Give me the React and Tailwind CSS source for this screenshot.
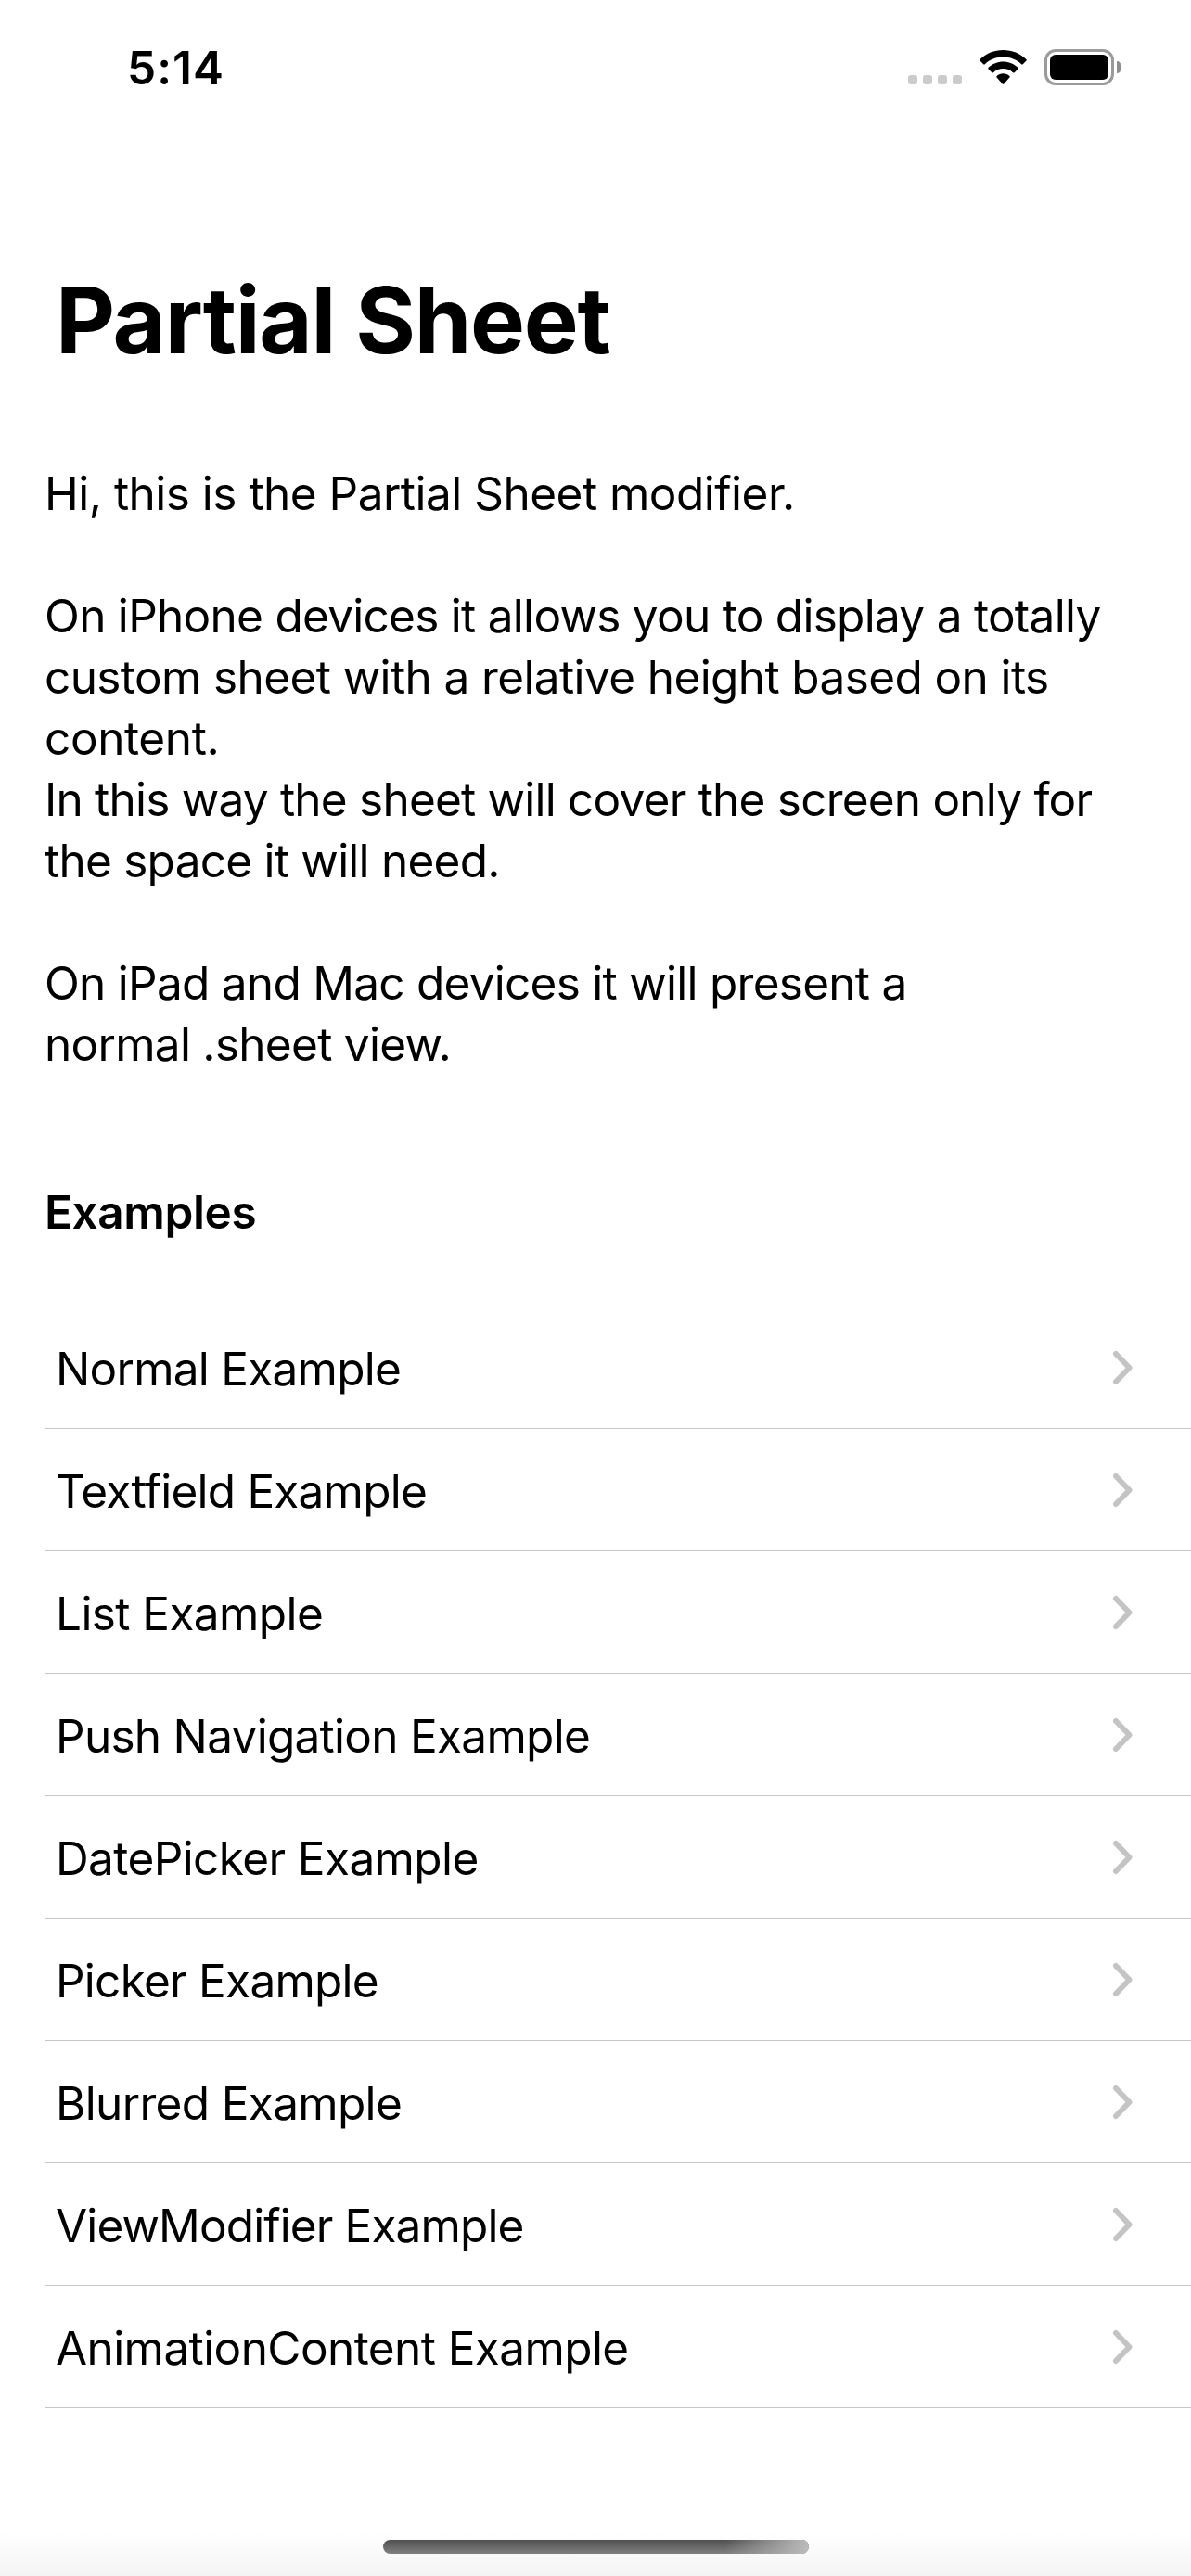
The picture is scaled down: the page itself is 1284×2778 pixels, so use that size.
import React from "react";

const intro = [
  { text: "Hi, this is the Partial Sheet modifier.", spacing: "tracking-[-0.51px]" },
  { text: "\u00a0", spacing: "" },
  { text: "On iPhone devices it allows you to display a totally", spacing: "tracking-[-0.72px]" },
  { text: "custom sheet with a relative height based on its", spacing: "tracking-[-0.61px]" },
  { text: "content.", spacing: "tracking-[-0.39px]" },
  { text: "In this way the sheet will cover the screen only for", spacing: "tracking-[-0.78px]" },
  { text: "the space it will need.", spacing: "tracking-[-0.75px]" },
  { text: "\u00a0", spacing: "" },
  { text: "On iPad and Mac devices it will present a", spacing: "tracking-[-0.73px]" },
  { text: "normal .sheet view.", spacing: "tracking-[-0.72px]" },
];

const examples = [
  { text: "Normal Example", spacing: "tracking-[-0.74px]" },
  { text: "Textfield Example", spacing: "tracking-[-0.78px]" },
  { text: "List Example", spacing: "tracking-[-0.59px]" },
  { text: "Push Navigation Example", spacing: "tracking-[-0.72px]" },
  { text: "DatePicker Example", spacing: "tracking-[-0.6px]" },
  { text: "Picker Example", spacing: "tracking-[-0.75px]" },
  { text: "Blurred Example", spacing: "tracking-[-0.66px]" },
  { text: "ViewModifier Example", spacing: "tracking-[-0.88px]" },
  { text: "AnimationContent Example", spacing: "tracking-[-0.59px]" },
];

function WifiIcon() {
  return (
    <svg className="mt-[54px] ml-[19px] h-[38px] w-[51px] shrink-0" viewBox="0 0 51 38" fill="#000">
      <path d="M25.5 0C35 0 43.8 3.6 50.4 9.9c.5.5.5 1.2 0 1.7l-3.6 3.6c-.5.5-1.2.5-1.7 0C39.900 10.300 32.900 7.600 25.500 7.600S11.100 10.300 5.900 15.200c-.5.5-1.200.5-1.700 0L.6 11.600c-.5-.5-.5-1.200 0-1.700C7.200 3.600 16 0 25.500 0Z" />
      <path d="M25.500 12.500c6 0 11.600 2.300 15.900 6.300.5.5.5 1.200 0 1.700l-3.700 3.700c-.5.5-1.200.5-1.700 0-2.900-2.600-6.600-4.100-10.500-4.100s-7.600 1.500-10.500 4.100c-.5.5-1.200.5-1.700 0l-3.700-3.700c-.5-.5-.5-1.200 0-1.700 4.300-4 9.900-6.300 15.900-6.300Z" />
      <path d="M25.500 25.300c2.600 0 5 .9 6.900 2.600.5.5.5 1.200 0 1.700l-6.100 6.900c-.5.5-1.100.5-1.600 0l-6.100-6.900c-.5-.5-.5-1.200 0-1.700 1.900-1.700 4.300-2.600 6.900-2.600Z" />
    </svg>
  );
}

function Battery() {
  return (
    <div className="mt-[53px] ml-[19px] flex items-center gap-[3px]">
      <div className="h-[39px] w-[75px] rounded-[12px] border-[3px] border-[#9b9b9b] p-[3px]">
        <div className="h-full w-full rounded-[6px] bg-black" />
      </div>
      <div className="h-[13px] w-[4px] rounded-r-full bg-[#8e8e8e]" />
    </div>
  );
}

function StatusBar() {
  return (
    <header className="flex h-[285px] shrink-0 items-start justify-between pr-[76px] pl-[137px]">
      <span className="mt-[40px] text-[49.5px] leading-[66px] font-semibold tracking-[1.05px]">5:14</span>
      <div className="flex items-start">
        <div className="mt-[81px] flex gap-[6px]">
          {[0, 1, 2, 3].map((dot) => (
            <span key={dot} className="size-[10px] rounded-[3px] bg-[#cbcbcb]" />
          ))}
        </div>
        <WifiIcon />
        <Battery />
      </div>
    </header>
  );
}

function ExampleRow({ text, spacing }) {
  return (
    <li className="flex h-[132px] items-start justify-between border-b border-[#c6c6c8] pt-[34px] pr-[63px] pl-3">
      <span className={spacing}>{text}</span>
      <svg
        className="mt-[13px] h-[38px] w-[22px]"
        viewBox="0 0 22 38"
        fill="none"
        stroke="#c4c4c6"
        strokeWidth="6"
        strokeLinecap="round"
        strokeLinejoin="round"
      >
        <path d="M4 4 L18.500 19 L4 34" />
      </svg>
    </li>
  );
}

export default function App() {
  return (
    <div className="relative flex h-[2778px] w-[1284px] flex-col overflow-hidden bg-white font-['Inter',sans-serif] text-[49.5px] leading-[66px] font-normal whitespace-nowrap text-black">
      <StatusBar />
      <h1 className="pl-[60px] text-[99px] leading-[120px] font-bold tracking-[-1.28px]">Partial Sheet</h1>
      <div className="mt-[94px] pl-12">
        {intro.map((line, i) => (
          <p key={i} className={line.spacing}>{line.text}</p>
        ))}
      </div>
      <h2 className="mt-[115px] pl-12 font-semibold tracking-[-0.38px]">Examples</h2>
      <ul className="mt-[69px] pl-12">
        {examples.map((row) => (
          <ExampleRow key={row.text} {...row} />
        ))}
      </ul>
      <footer className="mt-auto flex h-[48px] justify-center bg-linear-to-b from-white to-[#f4f4f4] pt-[9px]">
        <div className="h-[15px] w-[459px] overflow-hidden rounded-full bg-linear-to-b from-[#505050] to-[#808080]">
          <div className="ml-auto h-full w-[90px] bg-linear-to-r from-transparent to-[#bcbcbc]" />
        </div>
      </footer>
    </div>
  );
}
